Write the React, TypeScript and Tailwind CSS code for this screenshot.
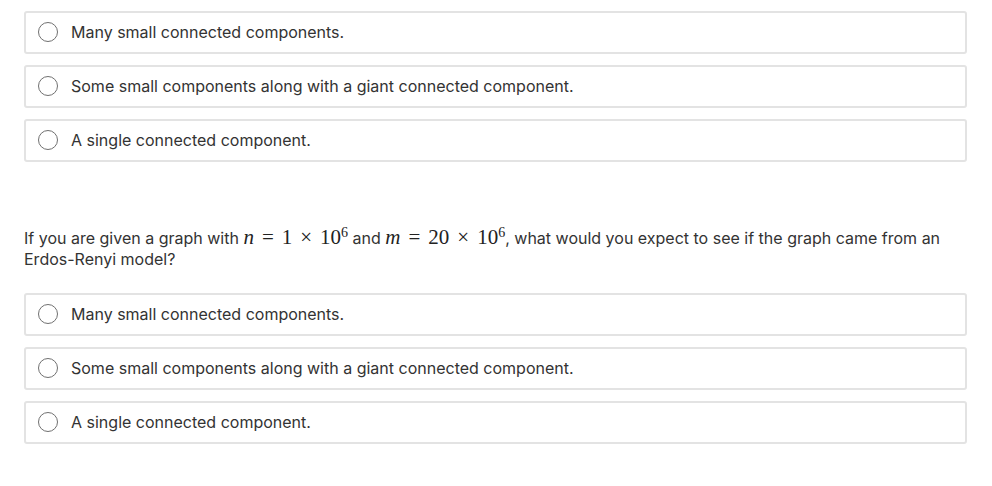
const options = [
  "Many small connected components.",
  "Some small components along with a giant connected component.",
  "A single connected component.",
];

function Option({ label }: { label: string }) {
  return (
    <label className="flex h-[43px] items-center rounded-[3px] border-2 border-[#e3e3e3] bg-white pb-[1px] pl-[12px]">
      <span className="h-[20px] w-[20px] shrink-0 rounded-full border border-[#707070] bg-white" />
      <span className="ml-[13px] text-[16px] text-[#333]">{label}</span>
    </label>
  );
}

function OptionList() {
  return (
    <div className="flex flex-col gap-[11px]">
      {options.map((label) => (
        <Option key={label} label={label} />
      ))}
    </div>
  );
}

function Op({ children }: { children: React.ReactNode }) {
  return <span className="mx-[8px]">{children}</span>;
}

function Math({ children }: { children: React.ReactNode }) {
  return (
    <span className="whitespace-nowrap font-['Liberation_Serif',serif] text-[21px] leading-none text-[#222]">
      {children}
    </span>
  );
}

export default function App() {
  return (
    <div className="min-h-[486px] bg-white pl-[24px] pr-[25px] pt-[11px] font-['Inter',sans-serif]">
      <OptionList />
      <p className="mt-[65px] text-[16px] leading-[21px] text-[#333]">
        If you are given a graph with{" "}
        <Math>
          <i>n</i>
          <Op>=</Op>1<Op>×</Op>10<sup className="text-[14px]">6</sup>
        </Math>{" "}
        and{" "}
        <Math>
          <i>m</i>
          <Op>=</Op>20<Op>×</Op>10<sup className="text-[14px]">6</sup>
        </Math>
        , what would you expect to see if the graph came from an Erdos-Renyi model?
      </p>
      <div className="mt-[23px]">
        <OptionList />
      </div>
    </div>
  );
}
